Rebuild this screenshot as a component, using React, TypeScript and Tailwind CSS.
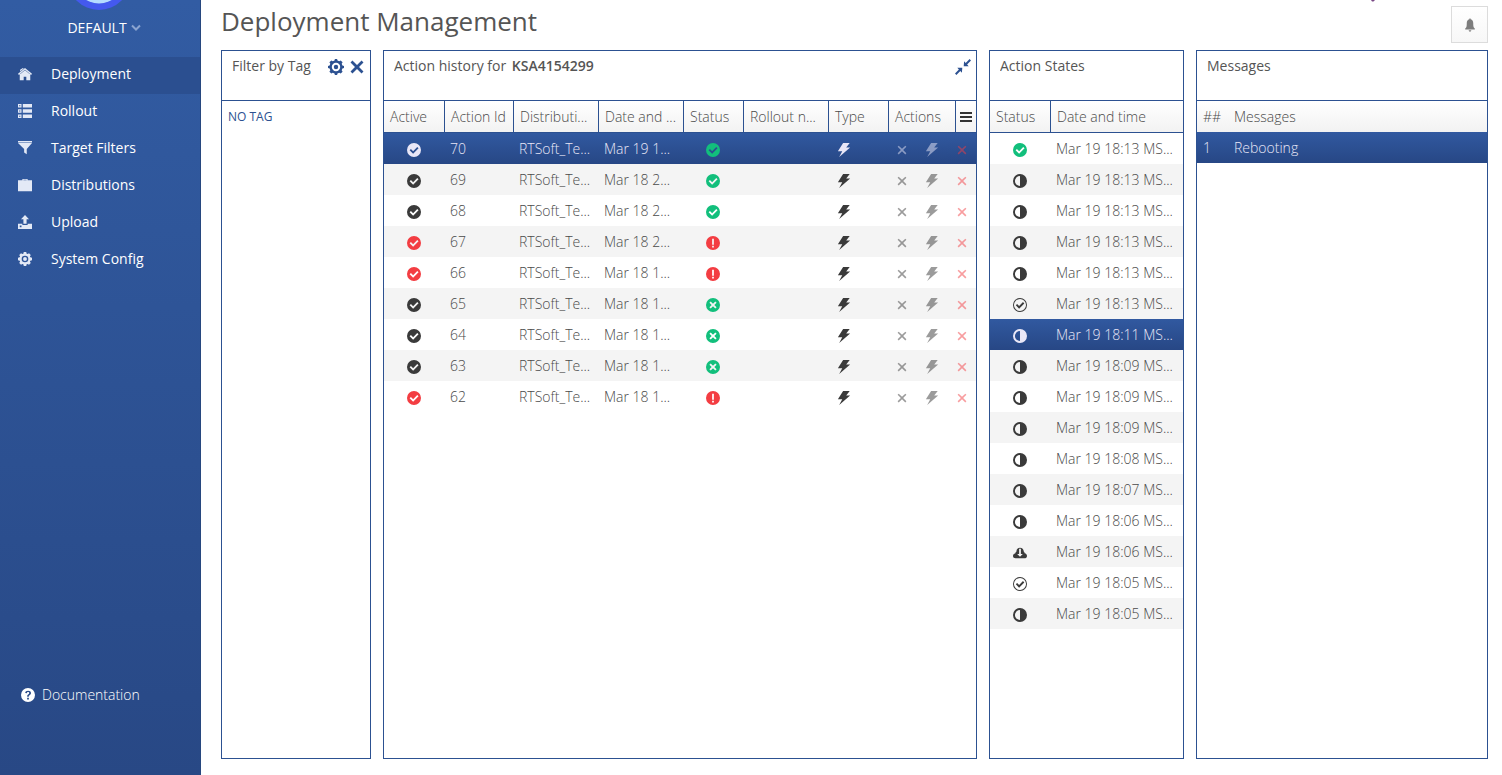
import React from "react";
import clsx from "clsx";

type IconProps = { className?: string };

function Glyph({ d, className }: { d: string; className?: string }) {
  return (
    <svg viewBox="0 0 16 16" className={clsx("block shrink-0 fill-current", className)} aria-hidden="true">
      <path fillRule="evenodd" d={d} />
    </svg>
  );
}

const DISC = "M8 0a8 8 0 1 0 0 16A8 8 0 0 0 8 0z";
const PATHS = {
  home: "M8 1.2L16 7.700 15 9 14 8.200V15H9.500v-4h-3v4H2V8.200L1 9 0 7.700zM2.400 3L5.600 1.200 6.600 1.800 2.400 5.200zM8 3.200L2.400 7.600 2.700 8 8 3.800l5.300 4.200.3-.4z",
  rollout:
    "M0 0h4v4H0zM1.3 1.3v1.4h1.4V1.3zM5.500 0H16v4H5.500zM0 6h4v4H0zM1.3 7.3v1.4h1.4V7.3zM5.500 6H16v4H5.500zM0 12h4v4H0zM1.3 13.3v1.4h1.4v-1.4zM5.500 12H16v4H5.500z",
  filter: "M0 0h16v1.6H0zM0 2.4h16L10 9v6.2L7 13V9z",
  briefcase: "M5 2.6V1h6v1.6h5V15H0V2.6zM6.2 2.6h3.6V1.9H6.2z",
  upload: "M8 0l4.6 4.8H9.8V10H6.2V4.8H3.4zM0 10h5v1.5h6V10h5v6H0zM2 12v2h2v-2z",
  gear:
    "M6.6 0h2.8l.5 1.9 1 .4 1.7-1 2 2-1 1.7.5 1.1 1.9.5v2.8l-1.9.5-.5 1 1 1.7-2 2-1.7-1-1 .5-.5 1.9H6.6l-.5-1.9-1-.5-1.7 1-2-2 1-1.7-.5-1L0 9.4V6.6l1.9-.5.5-1.1-1-1.7 2-2 1.7 1 1-.4zM8 4.2a3.8 3.8 0 1 0 0 7.6 3.8 3.8 0 0 0 0-7.6zM8 5.8a2.2 2.2 0 1 1 0 4.4 2.2 2.2 0 0 1 0-4.4z",
  cog:
    "M6.9 0h2.2l.4 1.600 1.700.7 1.500-.9 1.900 1.900-.9 1.500.7 1.700 1.600.4v2.200l-1.600.4-.7 1.700.9 1.500-1.900 1.900-1.500-.9-1.700.7-.4 1.600H6.900l-.4-1.600-1.700-.7-1.500.9-1.900-1.900.9-1.500-.7-1.700L0 9.100V6.900l1.600-.4.7-1.700-.9-1.500 1.900-1.900 1.500.9 1.700-.7zM8 3.800a4.200 4.200 0 1 0 0 8.400 4.200 4.200 0 0 0 0-8.400zM8 5.800a2.200 2.200 0 1 1 0 4.400 2.200 2.200 0 0 1 0-4.400z",
  close: "M2.8.6L8 5.7 13.2.6l2.2 2.2L10.300 8l5.1 5.200-2.200 2.200L8 10.300l-5.200 5.100L.6 13.200 5.700 8 .6 2.800z",
  thinClose: "M4.200 3L8 6.700 11.800 3 13 4.200 9.300 8l3.700 3.800-1.200 1.200L8 9.300 4.200 13 3 11.800 6.700 8 3 4.200z",
  compress: "M16 1.400L14.600 0l-3.900 3.900-1.600-1.600-.4 5h5l-1.600-1.900zM0 14.600L1.400 16l3.900-3.900 1.600 1.600.4-5h-5l1.600 1.900z",
  check: DISC + "M7 12.300L3 8.400l1.500-1.500L7 9.300l4.700-4.700L13.200 6z",
  checkOutline:
    DISC + "M8 1.100a6.900 6.900 0 1 1 0 13.800A6.900 6.900 0 0 1 8 1.100zM7 12.200L3.200 8.400l1.500-1.500L7 9.200l4.400-4.500 1.500 1.500z",
  exclamation: DISC + "M7 3h2v7H7zM7 11h2v2H7z",
  cross: DISC + "M5.400 3.900L8 6.500l2.600-2.600 1.500 1.500L9.500 8l2.600 2.600-1.500 1.500L8 9.500l-2.600 2.600-1.500-1.500L6.500 8 3.900 5.400z",
  half: DISC + "M8 2.200v11.600A5.800 5.800 0 0 1 8 2.200z",
  bolt: "M7 0h7.500l-4 5H15L2.500 16 6 9.500H1z",
  cloud:
    "M4 6.200C4 3.500 5.600 2 8 2s4.200 1.600 4.300 4.200c.7.6 1 1.300 1 2.200 1.700.3 2.700 1.400 2.700 2.900C16 13 14.800 14 13 14H3c-1.800 0-3-1-3-2.600C0 10 1 8.800 2.700 8.400c0-.9.5-1.700 1.300-2.200zM7 3v6H4.800L8 12.400 11.200 9H9V3z",
  bell: "M7.300.500h1.400v1C10.900 2 11.700 3.800 11.700 6c0 3.500.3 5 1.800 6v1h-11v-1c1.500-1 1.800-2.500 1.800-6 0-2.200.8-4 3-4.500zM6.500 14h3c0 1-.7 1.600-1.500 1.600S6.500 15 6.500 14z",
  help:
    DISC +
    "M7 11h2v2H7zM4.800 5.700C4.900 4 6.200 3 8.100 3c1.900 0 3.300 1 3.300 2.700 0 1.200-.7 1.900-1.600 2.500-.7.4-.9.700-.9 1.300v.5H7.100v-.7c0-1.100.5-1.700 1.400-2.300.6-.4.900-.7.900-1.300 0-.7-.5-1.100-1.300-1.100S6.800 5 6.700 5.900z",
};

const nav: { label: string; icon: string }[] = [
  { label: "Deployment", icon: PATHS.home },
  { label: "Rollout", icon: PATHS.rollout },
  { label: "Target Filters", icon: PATHS.filter },
  { label: "Distributions", icon: PATHS.briefcase },
  { label: "Upload", icon: PATHS.upload },
  { label: "System Config", icon: PATHS.gear },
];

type Result = "ok" | "error" | "canceled";
const actions: { id: number; failed: boolean; date: string; result: Result }[] = [
  { id: 70, failed: false, date: "Mar 19 1...", result: "ok" },
  { id: 69, failed: false, date: "Mar 18 2...", result: "ok" },
  { id: 68, failed: false, date: "Mar 18 2...", result: "ok" },
  { id: 67, failed: true, date: "Mar 18 2...", result: "error" },
  { id: 66, failed: true, date: "Mar 18 1...", result: "error" },
  { id: 65, failed: false, date: "Mar 18 1...", result: "canceled" },
  { id: 64, failed: false, date: "Mar 18 1...", result: "canceled" },
  { id: 63, failed: false, date: "Mar 18 1...", result: "canceled" },
  { id: 62, failed: true, date: "Mar 18 1...", result: "error" },
];
const resultIcon = { ok: PATHS.check, error: PATHS.exclamation, canceled: PATHS.cross };

const states: { time: string; icon: string }[] = [
  { time: "18:13", icon: "done" },
  { time: "18:13", icon: "half" },
  { time: "18:13", icon: "half" },
  { time: "18:13", icon: "half" },
  { time: "18:13", icon: "half" },
  { time: "18:13", icon: "outline" },
  { time: "18:11", icon: "half" },
  { time: "18:09", icon: "half" },
  { time: "18:09", icon: "half" },
  { time: "18:09", icon: "half" },
  { time: "18:08", icon: "half" },
  { time: "18:07", icon: "half" },
  { time: "18:06", icon: "half" },
  { time: "18:06", icon: "cloud" },
  { time: "18:05", icon: "outline" },
  { time: "18:05", icon: "half" },
];
const stateIcon: Record<string, string> = {
  done: PATHS.check,
  half: PATHS.half,
  outline: PATHS.checkOutline,
  cloud: PATHS.cloud,
};

const tableClass = "w-full table-fixed border-separate border-spacing-0 text-sm leading-5 font-light";
const selectedRow = "bg-linear-to-b from-[#3159a0] to-[#274785] text-[#e9e7f7]";
const headRow = "bg-linear-to-b from-white to-[#f2f2f2] text-left text-[#4a4a4a]";
const headCell = "h-8 border-b border-[#2c5191] pr-1 pl-[6px] font-light whitespace-nowrap";
const split = "border-r";
const textCell = "px-[5px] py-0 whitespace-nowrap";
const iconCell = "pt-[2px] pr-[2px] pb-0 pl-0";

function rowClass(index: number, selected: boolean) {
  return clsx("h-[31px]", selected ? selectedRow : index % 2 ? "bg-[#f4f4f4] text-[#4a4a4a]" : "bg-white text-[#4a4a4a]");
}

function Panel({ title, tools, children }: { title: React.ReactNode; tools?: React.ReactNode; children: React.ReactNode }) {
  return (
    <section className="flex min-w-0 flex-col border border-[#2c5191] bg-white">
      <header className="flex h-[50px] items-start justify-between border-b border-[#2c5191] pt-[5px] pr-1 pl-[10px]">
        <h2 className="truncate text-sm leading-5">{title}</h2>
        {tools}
      </header>
      {children}
    </section>
  );
}

function IconButton({ label, d, className }: { label: string; d: string } & IconProps) {
  return (
    <button type="button" aria-label={label} className="flex items-center justify-center">
      <Glyph d={d} className={className} />
    </button>
  );
}

function Sidebar() {
  return (
    <aside className="flex w-[201px] shrink-0 flex-col border-r border-[#27477f] bg-linear-to-b from-[#325ca3] to-[#284885] text-white">
      <svg viewBox="0 0 64 10" className="mx-auto h-[10px] w-16" aria-hidden="true">
        <circle cx="31" cy="-21.500" r="31.500" fill="#4459ee" />
        <circle cx="31" cy="-21.500" r="25" fill="#b5dcff" />
      </svg>
      <button type="button" className="mt-2 flex h-5 items-center justify-center gap-1 pl-2 text-sm">
        DEFAULT
        <svg viewBox="0 0 10 8" className="h-2 w-[10px] fill-none stroke-[#8ba4d0] stroke-2" aria-hidden="true">
          <path d="M1 1.500l4 4 4-4" />
        </svg>
      </button>
      <nav className="mt-[19px] flex flex-col">
        {nav.map((item, i) => (
          <a
            key={item.label}
            href="#"
            className={clsx("flex h-[37px] items-center gap-[19px] pb-[3px] pl-[18px] text-sm", i === 0 && "bg-[#2b4f90]")}
          >
            <Glyph d={item.icon} className="size-[14px] text-[#e3e9f6]" />
            {item.label}
          </a>
        ))}
      </nav>
      <a href="#" className="mt-auto mb-[70px] flex h-5 items-center gap-[7px] pl-[21px] text-sm font-light">
        <Glyph d={PATHS.help} className="size-[14px]" />
        Documentation
      </a>
    </aside>
  );
}

function ActionHistory() {
  return (
    <table className={tableClass}>
      <colgroup>
        <col className="w-[61px]" />
        <col className="w-[69px]" />
        <col className="w-[85px]" />
        <col className="w-[85px]" />
        <col className="w-[60px]" />
        <col className="w-[85px]" />
        <col className="w-[60px]" />
        <col className="w-[28px]" />
        <col className="w-[30px]" />
        <col className="w-[29px]" />
      </colgroup>
      <thead>
        <tr className={headRow}>
          {["Active", "Action Id", "Distributi...", "Date and ...", "Status", "Rollout n...", "Type"].map((h) => (
            <th key={h} className={clsx(headCell, split)}>
              {h}
            </th>
          ))}
          <th colSpan={3} className="h-8 border-b border-[#2c5191] p-0 font-light">
            <div className="flex h-[31px] items-center justify-between">
              <span className="pl-[6px]">Actions</span>
              <button
                type="button"
                aria-label="Choose columns"
                className="flex h-full w-[21px] items-center justify-center border-l border-[#2c5191]"
              >
                <svg viewBox="0 0 12 10" className="h-[10px] w-3 fill-[#333]" aria-hidden="true">
                  <path d="M0 0h12v2H0zM0 4h12v2H0zM0 8h12v2H0z" />
                </svg>
              </button>
            </div>
          </th>
        </tr>
      </thead>
      <tbody>
        {actions.map((a, i) => {
          const selected = i === 0;
          const tone = selected ? "text-[#e9e7f7]" : "text-[#3a3a3a]";
          return (
            <tr key={a.id} className={rowClass(i, selected)}>
              <td className={iconCell}>
                <Glyph d={PATHS.check} className={clsx("mx-auto size-[14px]", a.failed ? "text-[#f33d42]" : tone)} />
              </td>
              <td className={textCell}>{a.id}</td>
              <td className={textCell}>RTSoft_Te...</td>
              <td className={textCell}>{a.date}</td>
              <td className={iconCell}>
                <Glyph
                  d={resultIcon[a.result]}
                  className={clsx("mx-auto size-[14px]", a.result === "error" ? "text-[#f33d42]" : "text-[#12bf7c]")}
                />
              </td>
              <td />
              <td className={iconCell}>
                <Glyph d={PATHS.bolt} className={clsx("ml-2 size-[14px]", tone)} />
              </td>
              <td className={iconCell}>
                <button type="button" aria-label="Cancel" className={clsx("mx-auto block opacity-50", tone)}>
                  <Glyph d={PATHS.thinClose} className="size-[14px]" />
                </button>
              </td>
              <td className="px-0 pt-[2px] pb-0">
                <button type="button" aria-label="Force" className={clsx("mx-auto block opacity-50", tone)}>
                  <Glyph d={PATHS.bolt} className="size-[14px]" />
                </button>
              </td>
              <td className="px-0 pt-[2px] pb-0">
                <button type="button" aria-label="Force quit" className="mx-auto block text-[#f33d42] opacity-50">
                  <Glyph d={PATHS.thinClose} className="size-[14px]" />
                </button>
              </td>
            </tr>
          );
        })}
      </tbody>
    </table>
  );
}

function ActionStates() {
  return (
    <table className={tableClass}>
      <thead>
        <tr className={headRow}>
          <th className={clsx(headCell, split, "w-[61px]")}>Status</th>
          <th className={headCell}>Date and time</th>
        </tr>
      </thead>
      <tbody>
        {states.map((s, i) => (
          <tr key={i} className={rowClass(i, i === 6)}>
            <td className={iconCell}>
              <Glyph
                d={stateIcon[s.icon]}
                className={clsx(
                  "mx-auto size-[14px]",
                  s.icon === "done" ? "text-[#12bf7c]" : i === 6 ? "text-[#e9e7f7]" : "text-[#3a3a3a]",
                )}
              />
            </td>
            <td className={textCell}>Mar 19 {s.time} MS...</td>
          </tr>
        ))}
      </tbody>
    </table>
  );
}

export default function App() {
  return (
    <div className="flex min-h-screen bg-white font-['Open_Sans',sans-serif] text-[#555]">
      <Sidebar />
      <main className="flex min-w-0 flex-1 flex-col pr-[14px] pb-4 pl-5">
        <div className="flex h-[50px] items-start">
          <h1 className="flex-1 pt-[3px] text-[26px] leading-9">Deployment Management</h1>
          <svg viewBox="0 0 4 2" className="mr-[76px] h-[2px] w-1 fill-[#7a4a86]" aria-hidden="true">
            <path d="M0 0h4L2.500 1.500H1z" />
          </svg>
          <button
            type="button"
            aria-label="Notifications"
            className="mt-[6px] flex size-[37px] items-center justify-center border border-[#dcdcdc] bg-linear-to-b from-white to-[#f7f7f7] text-[#7d7d7d]"
          >
            <Glyph d={PATHS.bell} className="size-[14px]" />
          </button>
        </div>
        <div className="grid flex-1 grid-cols-[150px_minmax(0,594fr)_minmax(0,195fr)_minmax(0,292fr)] gap-3">
          <Panel
            title="Filter by Tag"
            tools={
              <div className="flex h-[22px] items-center gap-[6px] pr-[2px] text-[#2c5191]">
                <IconButton label="Configure tags" d={PATHS.cog} className="size-4" />
                <IconButton label="Close" d={PATHS.close} className="size-[14px]" />
              </div>
            }
          >
            <button type="button" className="mt-[6px] px-[6px] text-left text-xs leading-5 text-[#2c5191]">
              NO TAG
            </button>
          </Panel>
          <Panel
            title={
              <>
                Action history for <b className="ml-[2px] font-semibold">KSA4154299</b>
              </>
            }
            tools={
              <div className="flex h-[22px] items-center pr-px text-[#2c5191]">
                <IconButton label="Minimize" d={PATHS.compress} className="size-4" />
              </div>
            }
          >
            <ActionHistory />
          </Panel>
          <Panel title="Action States">
            <ActionStates />
          </Panel>
          <Panel title="Messages">
            <table className={tableClass}>
              <thead>
                <tr className={clsx(headRow, "h-[31px]")}>
                  <th className="w-[31px] px-[6px] py-0 font-light">##</th>
                  <th className="px-[6px] py-0 font-light">Messages</th>
                </tr>
              </thead>
              <tbody>
                <tr className={clsx("h-[31px]", selectedRow)}>
                  <td className="px-[6px] py-0">1</td>
                  <td className="px-[6px] py-0">Rebooting</td>
                </tr>
              </tbody>
            </table>
          </Panel>
        </div>
      </main>
    </div>
  );
}
